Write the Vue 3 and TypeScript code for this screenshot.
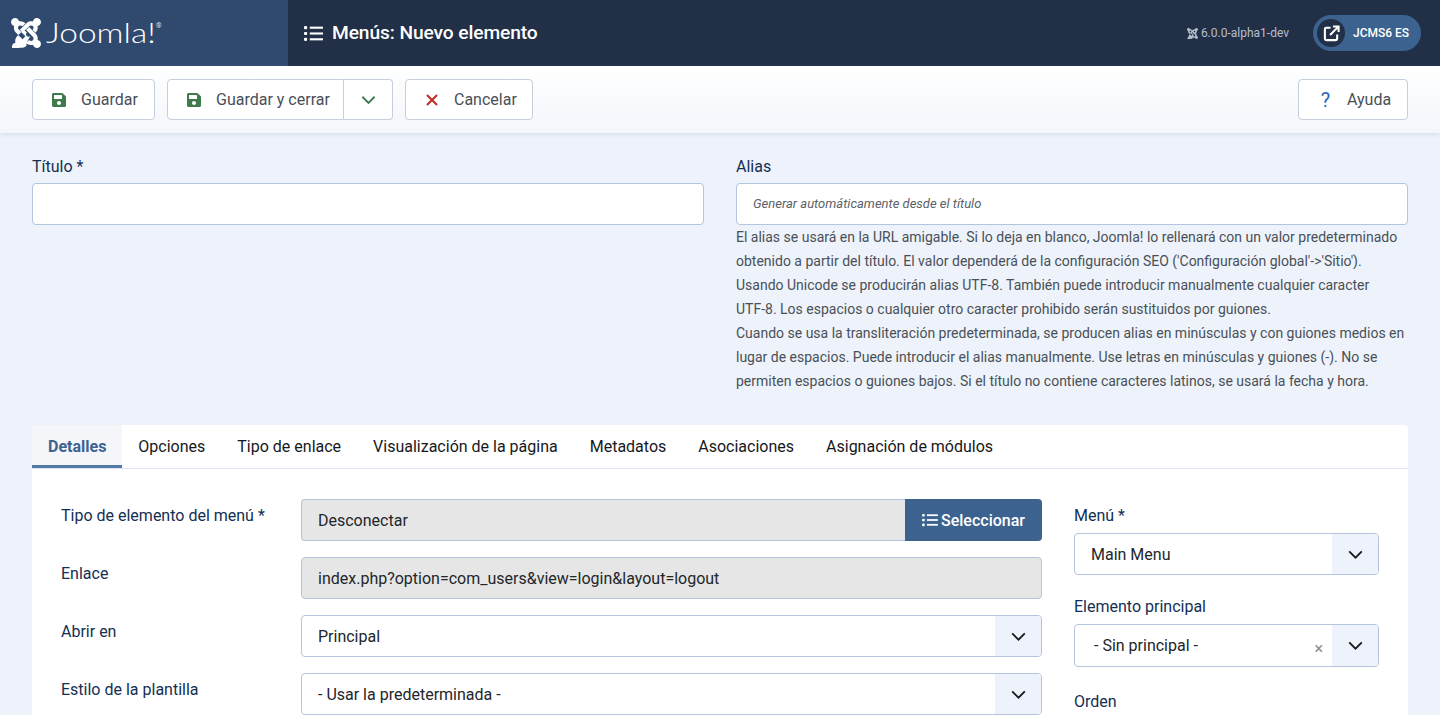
<script setup lang="ts">
const savePath = 'M433.941 129.941l-83.882-83.882A48 48 0 0 0 316.118 32H48C21.49 32 0 53.49 0 80v352c0 26.51 21.49 48 48 48h352c26.51 0 48-21.49 48-48V163.882a48 48 0 0 0-14.059-33.941zM224 416c-35.346 0-64-28.654-64-64 0-35.346 28.654-64 64-64s64 28.654 64 64c0 35.346-28.654 64-64 64zm96-304.52V212c0 6.627-5.373 12-12 12H76c-6.627 0-12-5.373-12-12V108c0-6.627 5.373-12 12-12h228.52c3.183 0 6.235 1.264 8.485 3.515l3.48 3.48A11.996 11.996 0 0 1 320 111.48z'
const joomlaPath = 'M.6 92.1C.6 58.8 27.4 32 60.4 32c30 0 54.5 21.9 59.2 50.2 32.6-7.6 67.1.6 96.5 30l-44.3 44.3c-20.5-20.5-42.6-16.3-55.4-3.5-14.3 14.3-14.3 37.9 0 52.2l99.5 99.5-44 44.3c-87.7-87.2-49.7-49.7-99.8-99.7-26.8-26.5-35-64.8-24.8-98.9C20.4 144.6.6 120.7.6 92.1zm129.5 116.4l44.3 44.3c10-10 89.7-89.7 99.7-99.8 14.3-14.3 37.6-14.3 51.9 0 12.8 12.8 17 35-3.5 55.4l44 44.3c31.2-31.2 38.5-67.6 28.9-101.2 29.2-4.1 51.9-29.2 51.9-59.5 0-33.2-26.8-60.1-59.8-60.1-30.3 0-55.4 22.5-59.5 51.6-33.8-9.9-71.7-1.5-98.3 25.1-18.3 18.3-86.7 86.8-99.6 99.6zm266.3 152.2c8.2-32.7-.9-68.5-26.3-93.9-11.8-11.8 37.5 37.5-99.7-99.7l-44.3 44.3 99.7 99.7c14.3 14.3 14.3 37.6 0 51.9-12.8 12.8-35 17-55.4-3.5l-44 44.3c27.6 27.6 68 38.8 102.7 28 5.5 27.4 29.7 48.1 58.9 48.1 33 0 59.8-26.8 59.8-60.1 0-30.2-22.5-55-51.4-58.9zM290.8 296c-20.5 20.5-42.6 16.3-55.4 3.5-14.3-14.3-14.3-37.6 0-51.9l-44.3-44.3-99.7 99.7c-26.5 26.5-34.6 64.8-24.8 98.9-29.2 4.1-51.9 29.2-51.9 59.5 0 33.2 26.8 60.1 59.8 60.1 28.9 0 53-20.5 58.9-47.6 33.7 8.2 70.3-.9 96.5-27l4.8-47.6z'
const tabs = ['Detalles', 'Opciones', 'Tipo de enlace', 'Visualización de la página', 'Metadatos', 'Asociaciones', 'Asignación de módulos']
</script>

<template>
  <div class="page">
    <header class="topbar">
      <div class="brand">
        <svg class="brand-mark" viewBox="0 32 448 448" aria-hidden="true"><path :d="joomlaPath" fill="#fff" /></svg>
        <span class="brand-name">Joomla!</span><sup class="brand-reg">®</sup>
      </div>
      <div class="title-area">
        <svg class="list-icon title-icon" viewBox="0 0 18 16" aria-hidden="true"><rect x="0" y="1" width="3" height="3" rx="1"/><rect x="0" y="6.5" width="3" height="3" rx="1"/><rect x="0" y="12" width="3" height="3" rx="1"/><rect x="5.5" y="1.5" width="12.5" height="2"/><rect x="5.5" y="7" width="12.5" height="2"/><rect x="5.5" y="12.5" width="12.5" height="2"/></svg>
        <h1 class="page-title">Menús: Nuevo elemento</h1>
      </div>
      <div class="top-right">
        <span class="version"><svg class="version-mark" viewBox="0 32 448 448" aria-hidden="true"><path :d="joomlaPath" fill="#b6bfcc" /></svg>6.0.0-alpha1-dev</span>
        <div class="site-pill">
          <span class="site-circle">
            <svg viewBox="0 0 18 18" width="17" height="17" fill="none" stroke="#fff" stroke-width="2.2" aria-hidden="true"><path d="M8 3H3.5A1.5 1.5 0 0 0 2 4.5v10A1.5 1.5 0 0 0 3.500 16h10a1.500 1.500 0 0 0 1.500-1.500V10"/><path d="M7.500 10.500 16 2M10.500 1.500H16.500V7.500"/></svg>
          </span>
          <span class="site-name">JCMS6 ES</span>
        </div>
      </div>
    </header>

    <div class="toolbar">
      <button class="btn">
        <svg class="icon-save" viewBox="0 0 448 512" aria-hidden="true"><path :d="savePath"/></svg>Guardar
      </button>
      <div class="btn-group">
        <button class="btn btn-main">
          <svg class="icon-save" viewBox="0 0 448 512" aria-hidden="true"><path :d="savePath"/></svg>Guardar y cerrar
        </button>
        <button class="btn btn-caret">
          <svg viewBox="0 0 16 10" width="15" height="10" fill="none" stroke="#3f7a4c" stroke-width="2" aria-hidden="true"><path d="M1.500 1.500 8 8l6.500-6.500"/></svg>
        </button>
      </div>
      <button class="btn btn-cancel">
        <svg class="icon-x" viewBox="0 0 12 12" aria-hidden="true"><path d="M1 1l10 10M11 1 1 11" fill="none" stroke="#c52827" stroke-width="2"/></svg>Cancelar
      </button>
      <button class="btn btn-help"><span class="help-q">?</span>Ayuda</button>
    </div>

    <main class="content">
      <div class="title-row">
        <div class="field">
          <label class="top-label">Título *</label>
          <input class="input" type="text" />
        </div>
        <div class="field">
          <label class="top-label">Alias</label>
          <input class="input alias" type="text" placeholder="Generar automáticamente desde el título" />
          <div class="help">El alias se usará en la URL amigable. Si lo deja en blanco, Joomla! lo rellenará con un valor predeterminado obtenido a partir del título. El valor dependerá de la configuración SEO ('Configuración global'-&gt;'Sitio').<br />Usando Unicode se producirán alias UTF-8. También puede introducir manualmente cualquier caracter <span class="nb">UTF-8.</span> Los espacios o cualquier otro caracter prohibido serán sustituidos por guiones.<br />Cuando se usa la transliteración predeterminada, se producen alias en minúsculas y con guiones medios en lugar de espacios. Puede introducir el alias manualmente. Use letras en minúsculas y guiones (-). No se permiten espacios o guiones bajos. Si el título no contiene caracteres latinos, se usará la fecha y hora.</div>
        </div>
      </div>

      <section class="card">
        <nav class="tabs">
          <button v-for="(t, i) in tabs" :key="t" class="tab" :class="{ active: i === 0 }">{{ t }}</button>
        </nav>
        <div class="panel">
          <div class="main-col">
            <div class="row">
              <label class="row-label">Tipo de elemento del menú *</label>
              <div class="input-group">
                <div class="box readonly joined">Desconectar</div>
                <button class="select-btn">
                  <svg class="list-icon" viewBox="0 0 18 16" aria-hidden="true"><rect x="0" y="1" width="3" height="3" rx="1"/><rect x="0" y="6.500" width="3" height="3" rx="1"/><rect x="0" y="12" width="3" height="3" rx="1"/><rect x="5.500" y="1.500" width="12.500" height="2"/><rect x="5.500" y="7" width="12.500" height="2"/><rect x="5.500" y="12.500" width="12.500" height="2"/></svg>
                  Seleccionar
                </button>
              </div>
            </div>
            <div class="row">
              <label class="row-label">Enlace</label>
              <div class="box readonly">index.php?option=com_users&amp;view=login&amp;layout=logout</div>
            </div>
            <div class="row">
              <label class="row-label">Abrir en</label>
              <div class="box select">Principal<span class="caret"><svg viewBox="0 0 16 10" width="15" height="9" fill="none" stroke="#16181c" stroke-width="2" aria-hidden="true"><path d="M1 1.500 8 8.500l7-7"/></svg></span></div>
            </div>
            <div class="row">
              <label class="row-label">Estilo de la plantilla</label>
              <div class="box select">- Usar la predeterminada -<span class="caret"><svg viewBox="0 0 16 10" width="15" height="9" fill="none" stroke="#16181c" stroke-width="2" aria-hidden="true"><path d="M1 1.500 8 8.500l7-7"/></svg></span></div>
            </div>
          </div>
          <aside class="side-col">
            <label class="side-label">Menú *</label>
            <div class="box select side-first">Main Menu<span class="caret"><svg viewBox="0 0 16 10" width="15" height="9" fill="none" stroke="#16181c" stroke-width="2" aria-hidden="true"><path d="M1 1.500 8 8.500l7-7"/></svg></span></div>
            <label class="side-label">Elemento principal</label>
            <div class="box select fancy"><span class="fancy-value">- Sin principal -</span><span class="clear">×</span><span class="caret"><svg viewBox="0 0 16 10" width="15" height="9" fill="none" stroke="#16181c" stroke-width="2" aria-hidden="true"><path d="M1 1.500 8 8.500l7-7"/></svg></span></div>
            <label class="side-label">Orden</label>
          </aside>
        </div>
      </section>
    </main>
  </div>
</template>

<style>
html, body { margin: 0; overflow: hidden; }
</style>

<style scoped>
* { box-sizing: border-box; }
.page { height: 715px; overflow: hidden; background: #eef3fb; font-family: Roboto, "Liberation Sans", sans-serif; color: #22262a; font-size: 16px; }
.topbar { height: 66px; display: flex; align-items: center; background: #212f47; color: #fff; }
.brand { width: 288px; height: 66px; background: #2f4a6e; display: flex; align-items: center; padding-left: 11px; flex: none; }
.brand-mark { width: 30px; height: 30px; flex: none; }
.brand-name { display: block; width: 110px; flex: none; font-family: Lato, sans-serif; font-weight: 300; font-size: 27px; line-height: 32px; margin-left: 5px; transform: scaleX(1.24); transform-origin: left center; }
.brand-reg { font-size: 7px; align-self: flex-start; margin-top: 22px; line-height: 8px; color: #dfe4ec; }
.title-area { display: flex; align-items: center; padding-left: 16px; flex: 1; }
.title-icon { width: 19px; height: 17px; margin-right: 9px; }
.list-icon { fill: currentColor; }
.page-title { margin: 0; font-size: 19.2px; font-weight: 500; line-height: 24px; letter-spacing: -0.1px; }
.top-right { display: flex; align-items: center; padding-right: 19px; }
.version { font-size: 12px; color: #b6bfcc; display: flex; align-items: center; margin-right: 24px; }
.version-mark { width: 11px; height: 11px; margin-right: 3px; }
.site-pill { width: 108px; height: 36px; border-radius: 18px; background: #3c6290; display: flex; align-items: center; padding-left: 4px; }
.site-circle { width: 28px; height: 28px; border-radius: 50%; background: #212f47; display: flex; align-items: center; justify-content: center; }
.site-name { font-size: 12px; font-weight: 500; margin-left: 8px; }
.toolbar { height: 67px; display: flex; align-items: center; gap: 12px; padding: 0 32px; background: linear-gradient(#fff, #f3f6fb); box-shadow: 0 2px 4px rgba(180, 195, 220, 0.35); position: relative; }
.btn { height: 41px; background: #fff; border: 1px solid #c5cfdd; border-radius: 4px; font: inherit; font-size: 16px; color: #495057; display: flex; align-items: center; padding: 0 0 0 19px; width: 123px; }
.icon-save { width: 14px; height: 16px; fill: #3f7a4c; margin-right: 15px; flex: none; }
.icon-x { width: 12px; height: 12px; margin-left: 1px; margin-right: 16px; }
.btn-cancel { width: 128px; }
.btn-group { display: flex; }
.btn-main { width: 177px; border-radius: 4px 0 0 4px; }
.btn-caret { width: 49px; border-left: 0; border-radius: 0 4px 4px 0; padding: 0; justify-content: center; }
.btn-help { margin-left: auto; width: 110px; padding-left: 20px; }
.help-q { color: #2a69b8; font-size: 20px; width: 13px; margin-right: 15px; }
.content { padding: 0 32px; }
.title-row { display: grid; grid-template-columns: 1fr 1fr; gap: 32px; padding-top: 21px; }
.top-label { display: block; font-size: 16px; line-height: 24px; color: #132f53; height: 29px; padding-top: 1px; }
.input { display: block; width: 100%; height: 42px; background: #fff; border: 1px solid #b4c5e0; border-radius: 4px; padding: 0 16px; outline: none; font: inherit; }
.alias { font-size: 13px; padding-bottom: 2px; }
.alias::placeholder { font-style: italic; color: #5c6167; opacity: 1; }
.help { font-size: 14px; line-height: 24px; color: #495057; }
.nb { white-space: nowrap; }
.card { margin-top: 32px; background: #fff; border-radius: 4px 4px 0 0; }
.tabs { height: 44px; display: flex; border-bottom: 1px solid #dde5f1; }
.tab { background: none; border: 0; font: inherit; font-size: 16px; color: #16181c; padding: 0 16px; height: 43px; }
.tab.active { font-weight: 700; color: #3c6290; background: #f4f6fa; border-bottom: 3px solid #557aa6; padding-top: 3px; }
.panel { display: flex; padding: 30px 29px 0; }
.main-col { width: 981px; flex: none; }
.row { display: grid; grid-template-columns: 240px 741px; margin-bottom: 16px; }
.row-label { color: #132f53; font-size: 16px; line-height: 24px; padding-top: 5px; }
.box { height: 42px; border: 1px solid #b4c5e0; border-radius: 4px; display: flex; align-items: center; padding-left: 16px; font-size: 16px; color: #22262a; background: #fff; position: relative; }
.readonly { background: #e6e6e6; }
.input-group { display: flex; }
.joined { flex: 1; border-radius: 4px 0 0 4px; border-right: 0; }
.select-btn { width: 137px; height: 42px; border: 0; background: #3c6290; color: #fff; border-radius: 0 4px 4px 0; font: inherit; font-size: 16px; font-weight: 500; display: flex; align-items: center; justify-content: center; gap: 3px; padding: 0; }
.select-btn .list-icon { width: 16px; height: 14px; }
.caret { position: absolute; right: 0; top: 0; bottom: 0; width: 46px; background: #eef3fb; border-radius: 0 3px 3px 0; display: flex; align-items: center; justify-content: center; }
.side-col { width: 305px; margin-left: 32px; }
.side-label { display: block; font-size: 16px; line-height: 24px; color: #132f53; height: 28px; margin-bottom: 6px; padding-top: 5px; }
.side-first { margin-bottom: 15px; }
.fancy { height: 43px; margin-bottom: 18px; padding-left: 19px; }
.fancy-value { line-height: 24px; }
.clear { position: absolute; right: 55px; top: 16px; color: #8a8a8a; font-size: 16px; line-height: 16px; }
</style>
